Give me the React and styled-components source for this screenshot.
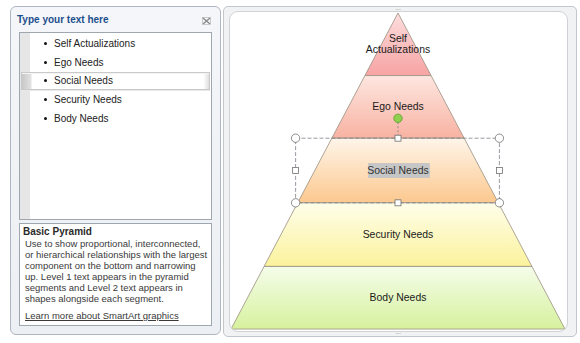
import React from "react";
import styled, { createGlobalStyle } from "styled-components";

const GlobalStyle = createGlobalStyle`
  html, body {
    margin: 0;
    padding: 0;
    background: #ffffff;
    font-family: "Liberation Sans", Arial, sans-serif;
  }
`;

const Screen = styled.div`
  display: flex;
  align-items: flex-start;
  gap: 2px;
  padding: 6px 0 0 10px;
  width: 580px;
  height: 343px;
  box-sizing: border-box;
`;

// ---- text pane on the left ----

const TextPane = styled.section`
  width: 211px;
  height: 329px;
  box-sizing: border-box;
  border: 1px solid #aeb6c1;
  border-radius: 6px;
  background: linear-gradient(#f4f6f9, #eceff3);
  display: flex;
  flex-direction: column;
  padding: 0 8px 7px 8px;
`;

const PaneHeader = styled.header`
  height: 25px;
  display: flex;
  align-items: center;
  justify-content: space-between;
`;

const PaneTitle = styled.h2`
  margin: 0 0 0 -2px;
  font-size: 10px;
  font-weight: bold;
  color: #1d4f8d;
`;

const CloseIcon = styled.svg`
  width: 9px;
  height: 8px;
  margin-right: 1px;
  margin-top: 3px;
`;

const ListBox = styled.ul`
  list-style: none;
  margin: 0;
  padding: 1px 0 0 0;
  height: 188px;
  box-sizing: border-box;
  border: 1px solid #9ea6b0;
  background: linear-gradient(to right, #e6e6e6 0, #e6e6e6 10px, #ffffff 10px);
  display: flex;
  flex-direction: column;
`;

const ListRow = styled.li`
  height: 18.75px;
  flex: none;
  display: flex;
  align-items: center;
  gap: 7px;
  padding-left: 22px;
  margin: 0 1px;
  font-size: 10px;
  color: #222;
  box-sizing: border-box;
  border: 1px solid ${(p) => (p.$active ? "#c9c9c9" : "transparent")};
  background: ${(p) =>
    p.$active
      ? "linear-gradient(to right, #c8c8c8 0, #e2e2e2 9px, #ffffff 10px, #ffffff 97%, #dedede 100%)"
      : "transparent"};
  box-shadow: ${(p) => (p.$active ? "inset 0 1px 0 #f4f4f4, 0 1px 0 #e8e8e8" : "none")};
`;

const Bullet = styled.span`
  width: 3px;
  height: 3px;
  border-radius: 50%;
  background: #111;
  flex: none;
`;

const InfoBox = styled.div`
  margin-top: 3px;
  height: 103px;
  box-sizing: border-box;
  border: 1px solid #9ea6b0;
  background: #ffffff;
  padding: 1px 3px 0 3px;
  font-size: 9.5px;
  color: #3a3a3a;
`;

const InfoTitle = styled.div`
  font-weight: bold;
  font-size: 10px;
  color: #2a2a2a;
  line-height: 13px;
`;

const InfoText = styled.p`
  margin: 0;
  padding-left: 2px;
  line-height: 11px;
  white-space: nowrap;
`;

const LearnLink = styled.a`
  display: block;
  margin-top: 6px;
  padding-left: 2px;
  color: #3a3a3a;
  text-decoration: underline;
  line-height: 11px;
`;

// ---- drawing canvas on the right ----

const CanvasFrame = styled.section`
  position: relative;
  width: 354px;
  height: 331px;
  box-sizing: border-box;
  border: 1px solid #c3c7cc;
  border-radius: 5px;
  background: #f1f2f4;
  padding: 4px 8px 4px 5px;
`;

const CanvasInner = styled.div`
  height: 100%;
  box-sizing: border-box;
  border: 1px solid #cfd2d6;
  border-radius: 9px;
  background: #ffffff;
  overflow: hidden;
  display: flex;
  align-items: flex-start;
`;

const Grip = styled.span`
  position: absolute;
  font-size: 7px;
  letter-spacing: -1px;
  color: #a8a8a8;
  line-height: 1;
  ${(p) => p.$pos}
`;

const segments = [
  { id: "self", top: 0, bot: 63, c1: "#fddede", c2: "#f7a3a3" },
  { id: "ego", top: 63, bot: 126, c1: "#fde6e0", c2: "#f8b2a2" },
  { id: "social", top: 126, bot: 191, c1: "#fef5ea", c2: "#fcc88e" },
  { id: "security", top: 191, bot: 255, c1: "#fefeea", c2: "#fbf29c" },
  { id: "body", top: 255, bot: 318, c1: "#f5fdea", c2: "#d6f19e" },
];

const CX = 169;
const half = (y) => (168 * y) / 318;

const Pyramid = () => (
  <svg width="339" height="319" viewBox="0 0 339 319">
    <defs>
      {segments.map((s) => (
        <linearGradient key={s.id} id={`g-${s.id}`} x1="0" y1="0" x2="0" y2="1">
          <stop offset="0" stopColor={s.c1} />
          <stop offset="1" stopColor={s.c2} />
        </linearGradient>
      ))}
    </defs>
    {segments.map((s) => {
      const a = half(s.top);
      const b = half(s.bot);
      return (
        <polygon
          key={s.id}
          points={`${CX - a},${s.top} ${CX + a},${s.top} ${CX + b},${s.bot} ${CX - b},${s.bot}`}
          fill={`url(#g-${s.id})`}
          stroke="#9a8f80"
          strokeWidth="0.8"
        />
      );
    })}
    <g
      fontFamily="'Liberation Sans', Arial, sans-serif"
      fontSize="10.5"
      fill="#1a1a1a"
      textAnchor="middle"
      dominantBaseline="middle"
    >
      <text x={CX} y="26">Self</text>
      <text x={CX} y="38">Actualizations</text>
      <text x={CX} y="95">Ego Needs</text>
      <rect x="139" y="151" width="62" height="15" fill="#c6c6c6" />
      <text x={CX} y="159" fill="#333">Social Needs</text>
      <text x={CX} y="224">Security Needs</text>
      <text x={CX} y="287">Body Needs</text>
    </g>
    {/* selection frame */}
    <rect x="66" y="126" width="205" height="65" fill="none" stroke="#7a8088" strokeWidth="0.8" strokeDasharray="4 2" />
    <line x1={CX} y1="110" x2={CX} y2="126" stroke="#7a8088" strokeWidth="0.8" strokeDasharray="2 2" />
    <circle cx={CX} cy="106" r="4.2" fill="#8fd14f" stroke="#5b9a2c" strokeWidth="0.8" />
    {[
      [66, 126],
      [271, 126],
      [66, 191],
      [271, 191],
    ].map(([x, y]) => (
      <circle key={`c${x}${y}`} cx={x} cy={y} r="4.2" fill="#fff" stroke="#707070" strokeWidth="0.8" />
    ))}
    {[
      [CX, 126],
      [CX, 191],
      [66, 158.5],
      [271, 158.5],
    ].map(([x, y]) => (
      <rect key={`s${x}${y}`} x={x - 3} y={y - 3} width="6" height="6" fill="#fff" stroke="#707070" strokeWidth="0.8" />
    ))}
  </svg>
);

const items = ["Self Actualizations", "Ego Needs", "Social Needs", "Security Needs", "Body Needs"];

export default function App() {
  return (
    <>
      <GlobalStyle />
      <Screen>
        <TextPane>
          <PaneHeader>
            <PaneTitle>Type your text here</PaneTitle>
            <CloseIcon viewBox="0 0 9 8">
              <path d="M1 1 L8 7 M8 1 L1 7" stroke="#8a8a8a" strokeWidth="1.4" />
              <rect x="0.5" y="0.5" width="8" height="7" fill="none" stroke="#b0b0b0" strokeWidth="0.6" />
            </CloseIcon>
          </PaneHeader>
          <ListBox>
            {items.map((t) => (
              <ListRow key={t} $active={t === "Social Needs"}>
                <Bullet />
                {t}
              </ListRow>
            ))}
          </ListBox>
          <InfoBox>
            <InfoTitle>Basic Pyramid</InfoTitle>
            <InfoText>
              Use to show proportional, interconnected,
              <br />
              or hierarchical relationships with the largest
              <br />
              component on the bottom and narrowing
              <br />
              up. Level 1 text appears in the pyramid
              <br />
              segments and Level 2 text appears in
              <br />
              shapes alongside each segment.
            </InfoText>
            <LearnLink>Learn more about SmartArt graphics</LearnLink>
          </InfoBox>
        </TextPane>
        <CanvasFrame>
          <Grip $pos="top: -1px; left: 171px;">····</Grip>
          <Grip $pos="bottom: -1px; left: 171px;">····</Grip>
          <CanvasInner>
            <Pyramid />
          </CanvasInner>
        </CanvasFrame>
      </Screen>
    </>
  );
}
